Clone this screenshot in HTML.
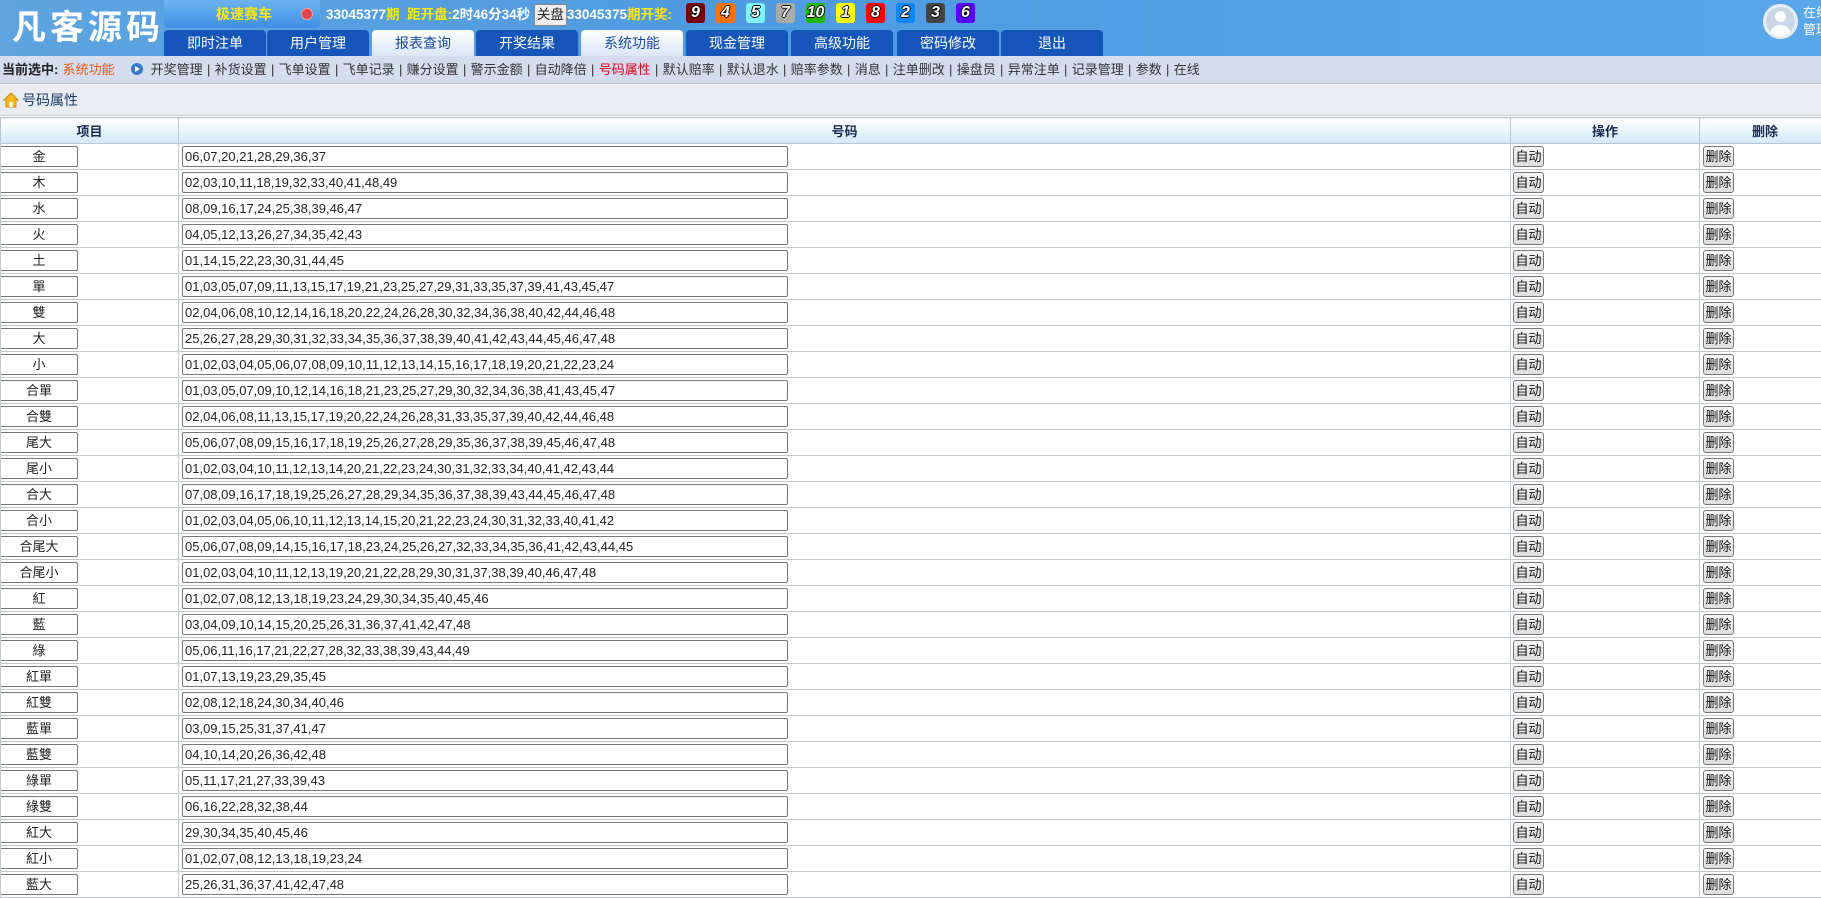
<!DOCTYPE html>
<html><head><meta charset="utf-8">
<style>
*{margin:0;padding:0;box-sizing:border-box}
body{width:1821px;height:885px;overflow:hidden;background:#fff;font-family:"Liberation Sans","Noto Sans CJK SC",sans-serif;font-size:13px;color:#222;position:relative}
#hd{position:absolute;left:0;top:0;width:1821px;height:56px;background:linear-gradient(90deg,#5da4e0 0%,#4f9ae0 40%,#5aa6ea 100%)}
#logo{position:absolute;left:12px;top:6px;font-size:34px;font-weight:bold;color:#fff;letter-spacing:4px;line-height:44px}
#dd{position:absolute;left:164px;top:0;width:156px;height:28px;background:linear-gradient(#6db4f4,#3f8fe4);border-radius:0 0 4px 4px;color:#ffea00;font-size:14px;font-weight:bold;line-height:28px;padding-left:52px}
#dd i{position:absolute;left:137px;top:8px;width:12px;height:12px;border-radius:50%;background:#e0444a;border:1px solid #f99}
#info{position:absolute;left:326px;top:4px;height:22px;line-height:22px;font-size:13.5px;font-weight:bold;color:#fff;white-space:nowrap}
#info .y{color:#ffea00}
#info .btn{display:inline-block;background:#eee;color:#222;font-weight:normal;border:1px solid #888;border-radius:2px;padding:0 2px;line-height:20px;height:22px}
.ball{position:absolute;top:3px;width:19px;height:20px;border-radius:3px;color:#fff;font-weight:bold;font-style:italic;font-size:16px;text-align:center;line-height:20px;text-shadow:-1px 0 #000,1px 0 #000,0 -1px #000,0 1px #000}
.tab{position:absolute;top:30px;width:102px;height:26px;background:#1656ba;color:#fff;font-size:14px;text-align:center;line-height:26px;border-radius:4px 4px 0 0}
.tab.a{background:linear-gradient(#fff,#dbe6f6);color:#1a4aa0}
#av{position:absolute;left:1763px;top:4px;width:35px;height:35px;border-radius:50%;border:3px solid #e8eef6;background:#c8d6e6;overflow:hidden}
#av:before{content:"";position:absolute;left:9px;top:4px;width:11px;height:11px;border-radius:50%;background:#fff}
#av:after{content:"";position:absolute;left:4px;top:18px;width:21px;height:14px;border-radius:10px 10px 0 0;background:#fff}
#ut{position:absolute;left:1803px;top:4px;color:#fff;font-size:13px;line-height:17px;white-space:nowrap}
#sub{position:absolute;left:0;top:56px;width:1821px;height:28px;background:#d4dcee;border-bottom:1px solid #b8bfcc;line-height:27px;font-size:13px;word-spacing:0.7px;color:#333;white-space:nowrap;padding-left:2px}
#sub b{color:#222;word-spacing:0}
#sub .o{color:#f25a10}
#sub .r{color:#e0001a}
#sub .ic{display:inline-block;width:12px;height:12px;border-radius:50%;background:#3a78c8;vertical-align:-1px;margin:0 8px 0 16px;position:relative}
#sub .ic:after{content:"";position:absolute;left:4px;top:3px;border-left:5px solid #fff;border-top:3px solid transparent;border-bottom:3px solid transparent}
#bc{position:absolute;left:0;top:85px;width:1821px;height:31px;background:#e9edf1;border-bottom:1px solid #c8d2dc;line-height:30px;font-size:14px;color:#1d3d6a;padding-left:22px}
#bc svg{position:absolute;left:3px;top:7px}
table{position:absolute;left:0;top:117px;border-collapse:collapse;width:1830px;table-layout:fixed}
th{height:26px;background:linear-gradient(#fff,#d2e9f6);color:#1a2a50;font-size:13px;border:1px solid #b8c6d4;font-weight:bold}
td{height:26px;border:1px solid #c0c8d0;padding:0;vertical-align:middle}
.k{display:block;width:77px;height:21px;border:1px solid #777;border-left:none;border-radius:0 2px 2px 0;text-align:center;line-height:19px;font-size:13px}
.v{display:block;margin-left:3px;width:606px;height:21px;border:1px solid #777;border-radius:2px;line-height:19px;padding-left:2px;font-size:13px}
.b{display:inline-block;margin-left:2px;width:31px;height:21px;border:1px solid #777;border-radius:3px;background:linear-gradient(#f6f6f6,#dedede);line-height:19px;text-align:center;font-size:13px;color:#111}
</style></head><body>
<div id="hd">
<div id="logo">凡客源码</div>
<div id="dd">极速赛车<i></i></div>
<div id="info">33045377<span class="y">期</span>&nbsp;&nbsp;<span class="y">距开盘:</span>2时46分34秒 <span class="btn">关盘</span>33045375<span class="y">期开奖:</span></div>
<div class="ball" style="left:686px;background:#7a0008">9</div>
<div class="ball" style="left:716px;background:#ff7200">4</div>
<div class="ball" style="left:746px;background:#7ff6ff">5</div>
<div class="ball" style="left:776px;background:#aaa">7</div>
<div class="ball" style="left:806px;background:#22b800">10</div>
<div class="ball" style="left:836px;background:#ffff00">1</div>
<div class="ball" style="left:866px;background:#f00">8</div>
<div class="ball" style="left:896px;background:#0a86ff">2</div>
<div class="ball" style="left:926px;background:#444">3</div>
<div class="ball" style="left:956px;background:#5a00ff">6</div>
<div class="tab" style="left:164px">即时注单</div>
<div class="tab" style="left:267px">用户管理</div>
<div class="tab a" style="left:372px">报表查询</div>
<div class="tab" style="left:476px">开奖结果</div>
<div class="tab a" style="left:581px">系统功能</div>
<div class="tab" style="left:686px">现金管理</div>
<div class="tab" style="left:791px">高级功能</div>
<div class="tab" style="left:897px">密码修改</div>
<div class="tab" style="left:1001px">退出</div>
<div id="av"></div>
<div id="ut">在线<br>管理</div>
</div>
<div id="sub"><b>当前选中:</b> <span class="o">系统功能</span><span class="ic"></span>开奖管理 | 补货设置 | 飞单设置 | 飞单记录 | 赚分设置 | 警示金额 | 自动降倍 | <span class="r">号码属性</span> | 默认赔率 | 默认退水 | 赔率参数 | 消息 | 注单删改 | 操盘员 | 异常注单 | 记录管理 | 参数 | 在线</div>
<div id="bc"><svg width="16" height="16" viewBox="0 0 16 16"><path d="M1 8 L8 1 L15 8 L13 8 L13 15 L3 15 L3 8 Z" fill="#f5b81e" stroke="#c88a10"/><rect x="6.5" y="10" width="3" height="5" fill="#fff"/></svg>号码属性</div>
<table>
<colgroup><col style="width:178px"><col style="width:1332px"><col style="width:189px"><col style="width:131px"></colgroup>
<tr><th>项目</th><th>号码</th><th>操作</th><th>删除</th></tr>
<tbody id="tb"></tbody>
</table>
<script>
var d=[["金","06,07,20,21,28,29,36,37"],["木","02,03,10,11,18,19,32,33,40,41,48,49"],["水","08,09,16,17,24,25,38,39,46,47"],["火","04,05,12,13,26,27,34,35,42,43"],["土","01,14,15,22,23,30,31,44,45"],["單","01,03,05,07,09,11,13,15,17,19,21,23,25,27,29,31,33,35,37,39,41,43,45,47"],["雙","02,04,06,08,10,12,14,16,18,20,22,24,26,28,30,32,34,36,38,40,42,44,46,48"],["大","25,26,27,28,29,30,31,32,33,34,35,36,37,38,39,40,41,42,43,44,45,46,47,48"],["小","01,02,03,04,05,06,07,08,09,10,11,12,13,14,15,16,17,18,19,20,21,22,23,24"],["合單","01,03,05,07,09,10,12,14,16,18,21,23,25,27,29,30,32,34,36,38,41,43,45,47"],["合雙","02,04,06,08,11,13,15,17,19,20,22,24,26,28,31,33,35,37,39,40,42,44,46,48"],["尾大","05,06,07,08,09,15,16,17,18,19,25,26,27,28,29,35,36,37,38,39,45,46,47,48"],["尾小","01,02,03,04,10,11,12,13,14,20,21,22,23,24,30,31,32,33,34,40,41,42,43,44"],["合大","07,08,09,16,17,18,19,25,26,27,28,29,34,35,36,37,38,39,43,44,45,46,47,48"],["合小","01,02,03,04,05,06,10,11,12,13,14,15,20,21,22,23,24,30,31,32,33,40,41,42"],["合尾大","05,06,07,08,09,14,15,16,17,18,23,24,25,26,27,32,33,34,35,36,41,42,43,44,45"],["合尾小","01,02,03,04,10,11,12,13,19,20,21,22,28,29,30,31,37,38,39,40,46,47,48"],["紅","01,02,07,08,12,13,18,19,23,24,29,30,34,35,40,45,46"],["藍","03,04,09,10,14,15,20,25,26,31,36,37,41,42,47,48"],["綠","05,06,11,16,17,21,22,27,28,32,33,38,39,43,44,49"],["紅單","01,07,13,19,23,29,35,45"],["紅雙","02,08,12,18,24,30,34,40,46"],["藍單","03,09,15,25,31,37,41,47"],["藍雙","04,10,14,20,26,36,42,48"],["綠單","05,11,17,21,27,33,39,43"],["綠雙","06,16,22,28,32,38,44"],["紅大","29,30,34,35,40,45,46"],["紅小","01,02,07,08,12,13,18,19,23,24"],["藍大","25,26,31,36,37,41,42,47,48"]];
var h="";d.forEach(function(r){h+='<tr><td><span class="k">'+r[0]+'</span></td><td><span class="v">'+r[1]+'</span></td><td><span class="b">自动</span></td><td><span class="b" style="margin-left:3px">删除</span></td></tr>'});
document.getElementById("tb").innerHTML=h;
</script>
</body></html>
